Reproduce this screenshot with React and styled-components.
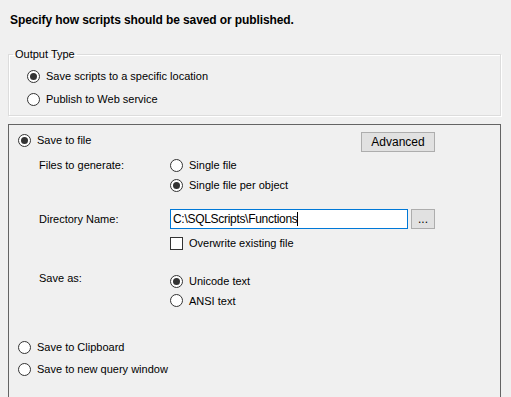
import React from "react"
import styled, { createGlobalStyle } from "styled-components"

const Global = createGlobalStyle`
    html, body {
        margin: 0;
        padding: 0;
        background: #f0f0f0;
    }
    body {
        font-family: "Liberation Sans", Arial, sans-serif;
        font-size: 11px;
        color: #000;
    }
`

const Page = styled.div`
    width: 511px;
    height: 397px;
    overflow: hidden;
    background: #f0f0f0;
    display: flex;
    flex-direction: column;
`

const Title = styled.div`
    margin: 13px 0 20px 10px;
    height: 14px;
    line-height: 14px;
    font-size: 12px;
    font-weight: bold;
    letter-spacing: -0.1px;
`

const Group = styled.fieldset`
    margin: 0 10px 0 8px;
    padding: 5px 0 6px 18px;
    border: 1px solid #dcdcdc;
    box-shadow: inset 1px 1px 0 #fff, 1px 1px 0 #fff;
    display: flex;
    flex-direction: column;
    gap: 3px;
    min-width: 0;
    legend {
        margin-left: -14px;
        padding: 0 2px;
        line-height: 14px;
    }
`

const Panel = styled.div`
    margin: 8px 10px 0 8px;
    flex: 1;
    border: 1px solid #646464;
    border-bottom: none;
    padding: 5px 0 0 9px;
    display: flex;
    flex-direction: column;
`

const Row = styled.div`
    display: flex;
    align-items: center;
    height: ${p => p.h || 20}px;
    margin-top: ${p => p.top || 0}px;
`

const Label = styled.div`
    width: 152px;
    padding-left: 21px;
    box-sizing: border-box;
    flex-shrink: 0;
    align-self: ${p => p.up ? "flex-start" : "center"};
    margin-top: ${p => p.up ? 1 : 0}px;
`

const Option = styled.label`
    display: flex;
    align-items: center;
    gap: 6px;
    white-space: nowrap;
`

const Circle = styled.span`
    width: 13px;
    height: 13px;
    box-sizing: border-box;
    border: 1px solid #333;
    border-radius: 50%;
    background: #fff;
    display: flex;
    align-items: center;
    justify-content: center;
    flex-shrink: 0;
    &::after {
        content: "";
        width: 7px;
        height: 7px;
        border-radius: 50%;
        background: ${p => p.on ? "#333" : "transparent"};
    }
`

const Box = styled.span`
    width: 13px;
    height: 13px;
    box-sizing: border-box;
    border: 1px solid #333;
    background: #fff;
    flex-shrink: 0;
`

const Button = styled.div`
    box-sizing: border-box;
    width: ${p => p.w}px;
    height: 20px;
    background: #e1e1e1;
    border: 1px solid #adadad;
    display: flex;
    align-items: center;
    justify-content: center;
    font-size: 12px;
`

const TopRow = styled.div`
    display: flex;
    justify-content: space-between;
    align-items: flex-start;
    height: 20px;
    padding-right: 65px;
`

const TextBox = styled.div`
    box-sizing: border-box;
    width: 238px;
    height: 20px;
    border: 1px solid #0078d7;
    background: #fff;
    padding-left: 2px;
    display: flex;
    align-items: center;
    margin-right: 3px;
    font-size: 12px;
    letter-spacing: -0.3px;
`

const Caret = styled.span`
    width: 1px;
    height: 14px;
    background: #000;
`

const Stack = styled.div`
    display: flex;
    flex-direction: column;
`

function Radio({ on, children }) {
    return (
        <Option>
            <Circle on={on ? 1 : 0} />
            {children}
        </Option>
    )
}

export default function App() {
    return (
        <Page>
            <Global />
            <Title>Specify how scripts should be saved or published.</Title>
            <Group>
                <legend>Output Type</legend>
                <Row><Radio on>Save scripts to a specific location</Radio></Row>
                <Row><Radio>Publish to Web service</Radio></Row>
            </Group>
            <Panel>
                <TopRow>
                    <Row><Radio on>Save to file</Radio></Row>
                    <Button w={74} style={{ marginTop: 2 }}>Advanced</Button>
                </TopRow>
                <Row top={5}>
                    <Label>Files to generate:</Label>
                    <Radio>Single file</Radio>
                </Row>
                <Row>
                    <Label />
                    <Radio on>Single file per object</Radio>
                </Row>
                <Row top={14}>
                    <Label>Directory Name:</Label>
                    <TextBox>C:\SQLScripts\Functions<Caret /></TextBox>
                    <Button w={24}>...</Button>
                </Row>
                <Row top={4}>
                    <Label />
                    <Option><Box />Overwrite existing file</Option>
                </Row>
                <Row top={18} h={39}>
                    <Label up>Save as:</Label>
                    <Stack>
                        <Row><Radio on>Unicode text</Radio></Row>
                        <Row h={19}><Radio>ANSI text</Radio></Row>
                    </Stack>
                </Row>
                <Row top={27}><Radio>Save to Clipboard</Radio></Row>
                <Row top={2}><Radio>Save to new query window</Radio></Row>
            </Panel>
        </Page>
    )
}
